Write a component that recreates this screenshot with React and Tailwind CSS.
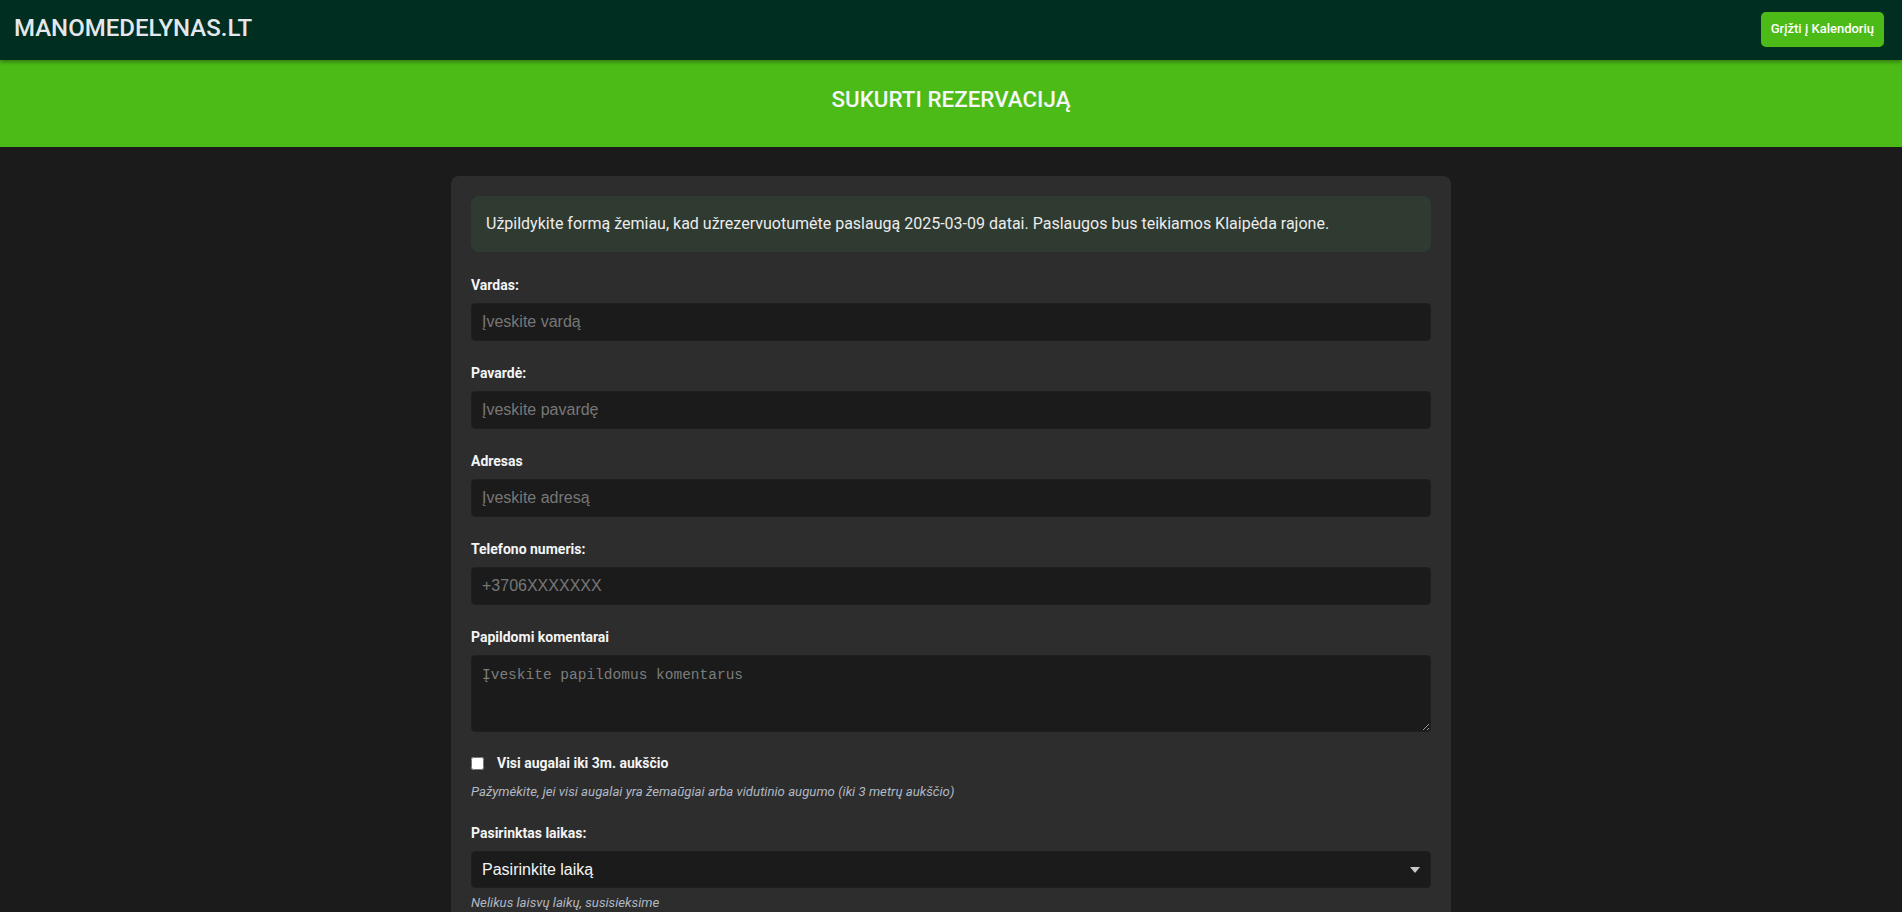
import React from 'react';

const Field = ({ label, children }) => (
  <div className="mb-[22px]">
    <label className="block h-5 leading-5 mb-2 text-[14px] font-bold text-[#f3f4f6]">{label}</label>
    {children}
  </div>
);

const inputCls =
  "block w-full h-[38px] px-[10px] rounded-[4px] bg-[#1b1b1b] border border-[#1f1f1f] text-[16px] text-[#e5e5e5] placeholder:text-[#777777] outline-none [font-family:'Liberation_Sans',Arial,sans-serif]";

const App = () => {
  return (
    <div className="min-h-screen bg-[#1b1b1b] [font-family:Roboto,'Noto_Sans',sans-serif]">
      {/* Header */}
      <header className="relative z-10 h-[60px] bg-[#002e20] flex items-center justify-between pl-[14px] pr-[18px] shadow-[0_2px_4px_rgba(0,0,0,0.35)]">
        <div className="text-[24px] font-medium text-[#e4e8ec] leading-none -mt-[4px]">MANOMEDELYNAS.LT</div>
        <button className="h-[35px] px-[10px] rounded-[5px] bg-[#4cbb17] text-white text-[13px] font-medium -mt-[2px]">
          Grįžti į Kalendorių
        </button>
      </header>

      {/* Title band */}
      <div className="h-[87px] bg-[#4cbb17] pt-[24px] text-center">
        <h1 className="text-[22.4px] leading-[30px] font-medium text-[#f4f6f8]">SUKURTI REZERVACIJĄ</h1>
      </div>

      {/* Form card */}
      <div className="mt-[29px] mx-auto w-[1000px] bg-[#2d2d2d] rounded-[8px] p-5 pb-10">
        <div className="rounded-[8px] bg-[#2f3a30] px-[15px] py-4 text-[16px] leading-6 text-[#ececec] mb-[23px]">
          Užpildykite formą žemiau, kad užrezervuotumėte paslaugą 2025-03-09 datai. Paslaugos bus teikiamos Klaipėda rajone.
        </div>

        <Field label="Vardas:">
          <input type="text" placeholder="Įveskite vardą" className={inputCls} />
        </Field>
        <Field label="Pavardė:">
          <input type="text" placeholder="Įveskite pavardę" className={inputCls} />
        </Field>
        <Field label="Adresas">
          <input type="text" placeholder="Įveskite adresą" className={inputCls} />
        </Field>
        <Field label="Telefono numeris:">
          <input type="tel" placeholder="+3706XXXXXXX" className={inputCls} />
        </Field>
        <Field label="Papildomi komentarai">
          <textarea
            placeholder="Įveskite papildomus komentarus"
            className="block w-full h-[77px] px-[10px] py-[9px] rounded-[4px] bg-[#1b1b1b] border border-[#1f1f1f] text-[14.5px] leading-5 text-[#e5e5e5] placeholder:text-[#7d7d7d] outline-none [font-family:'Liberation_Mono',monospace]"
          />
        </Field>

        <div className="flex items-center h-5 -mt-[1px]">
          <input type="checkbox" className="m-0 w-[13px] h-[13px]" />
          <span className="ml-[13px] text-[14px] font-bold text-[#f3f4f6]">Visi augalai iki 3m. aukščio</span>
        </div>
        <p className="mt-[10px] text-[13.2px] leading-[18px] italic text-[#b0b8c4]">
          Pažymėkite, jei visi augalai yra žemaūgiai arba vidutinio augumo (iki 3 metrų aukščio)
        </p>

        <div className="mt-[22px]">
          <label className="block h-5 leading-5 mb-2 text-[14px] font-bold text-[#f3f4f6]">Pasirinktas laikas:</label>
          <div className="relative">
            <select className="block w-full h-[37px] pl-[10px] pr-8 rounded-[4px] bg-[#1b1b1b] border border-[#1f1f1f] text-[16px] text-[#f5f5f5] appearance-none outline-none [font-family:'Liberation_Sans',Arial,sans-serif]">
              <option>Pasirinkite laiką</option>
            </select>
            <svg className="absolute right-[11px] top-1/2 -translate-y-1/2 pointer-events-none" width="10" height="6" viewBox="0 0 10 6">
              <path d="M0 0h10L5 6z" fill="#c9c9c9" />
            </svg>
          </div>
          <p className="mt-[6px] text-[13.2px] leading-[18px] italic text-[#b0b8c4]">Nelikus laisvų laikų, susisieksime</p>
        </div>

        <button className="mt-6 w-full h-[42px] rounded-[5px] bg-[#4cbb17] text-white text-[16px] font-medium">
          Rezervuoti
        </button>
      </div>
    </div>
  );
};

export default App;
